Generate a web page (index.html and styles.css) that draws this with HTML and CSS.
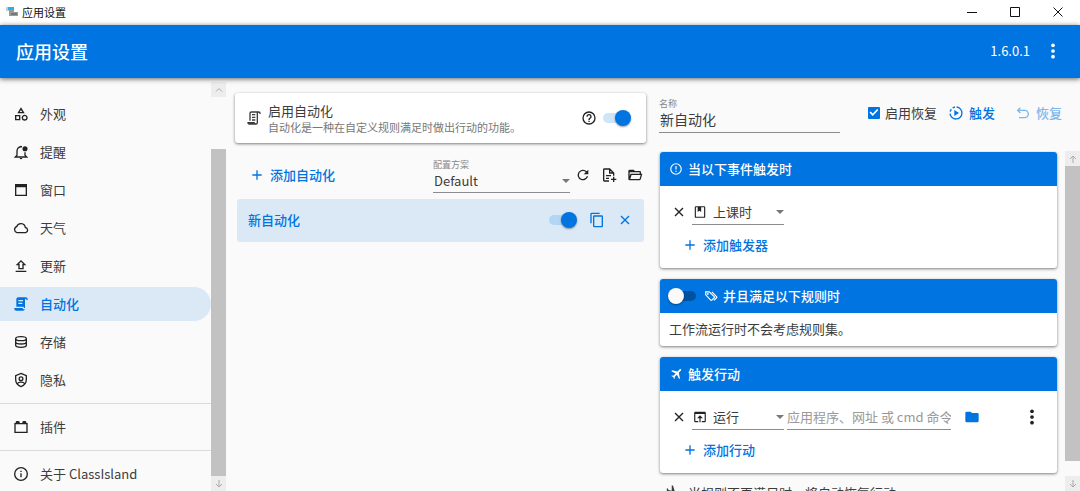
FILE: index.html
```html
<!DOCTYPE html>
<html lang="zh-CN">
<head>
<meta charset="utf-8">
<title>应用设置</title>
<link rel="stylesheet" href="styles.css">
</head>
<body>
<svg class="sprite" aria-hidden="true">
  <symbol id="shapes" viewBox="0 0 24 24"><path d="M11 13.5V21.5H3V13.5H11M9 15.5H5V19.5H9V15.5M12 2L17.5 11H6.5L12 2M12 5.86L10.08 9H13.92L12 5.86M17.5 13C20 13 22 15 22 17.5S20 22 17.5 22 13 20 13 17.5 15 13 17.5 13M17.5 15A2.5 2.5 0 1 0 17.5 20A2.5 2.5 0 0 0 17.5 15Z"/></symbol>
  <symbol id="bell" viewBox="0 0 24 24"><path class="line" d="M13.500 4.200C9 3.400 6 6.500 6 10.500V17L3.500 19.500H20.500L18 17V12.500"/><circle cx="18" cy="7" r="3.800"/><path d="M10 21H14A2 2 0 0 1 10 21M10.300 4A1.800 1.800 0 0 1 13.700 4Z"/></symbol>
  <symbol id="window" viewBox="0 0 24 24"><path fill-rule="evenodd" d="M3 3H21V21H3ZM5 8V19H19V8Z"/></symbol>
  <symbol id="cloud" viewBox="0 0 24 24"><path class="line" d="M6 19A4.700 4.700 0 0 1 5.500 10A6.700 6.700 0 0 1 18.500 11.200A4 4 0 0 1 19 19Z"/></symbol>
  <symbol id="upload" viewBox="0 0 24 24"><path fill-rule="evenodd" d="M4 19H20V21H4ZM8 17V11H4L12 3L20 11H16V17ZM10 15H14V9H15.200L12 5.800L8.800 9H10Z"/></symbol>
  <symbol id="script" viewBox="0 0 24 24"><path d="M17.800 20C17.400 21.200 16.300 22 15 22H5C3.300 22 2 20.700 2 19V18H5L14.200 18C14.600 19.200 15.700 20 17 20H17.800M19 2C20.700 2 22 3.300 22 5V6H20V5C20 4.400 19.600 4 19 4S18 4.400 18 5V18H17C16.400 18 16 17.600 16 17V16H5V5C5 3.300 6.300 2 8 2H19M8 6V8H15V6H8M8 10V12H14V10H8Z"/></symbol>
  <symbol id="script-line" viewBox="0 0 24 24"><path d="M15 20A1 1 0 0 0 16 19V4H8A1 1 0 0 0 7 5V16H5V5A3 3 0 0 1 8 2H19A3 3 0 0 1 22 5V6H20V5A1 1 0 0 0 19 4A1 1 0 0 0 18 5V19A3 3 0 0 1 15 22H5A3 3 0 0 1 2 19V18H13A2 2 0 0 0 15 20M9 6H14V8H9V6M9 10H14V12H9V10M9 14H14V16H9V14Z"/></symbol>
  <symbol id="database" viewBox="0 0 24 24"><path class="line" d="M4 7C4 3 20 3 20 7V17C20 21 4 21 4 17ZM4 7C4 11 20 11 20 7M4 12C4 16 20 16 20 12"/></symbol>
  <symbol id="shield" viewBox="0 0 24 24"><path class="line" d="M12 2.200L20 5.500V11C20 16 16.500 20.500 12 21.800C7.500 20.500 4 16 4 11V5.500ZM6.500 17.500C8.500 14.500 15.500 14.500 17.500 17.500"/><circle class="line" cx="12" cy="10" r="2.800"/></symbol>
  <symbol id="brick" viewBox="0 0 24 24"><path fill-rule="evenodd" d="M2 6H4V5Q4 3 6 3H8Q10 3 10 5V6H14V5Q14 3 16 3H18Q20 3 20 5V6H22V21H2ZM4 8V19H20V8Z"/></symbol>
  <symbol id="info" viewBox="0 0 24 24"><circle class="line" cx="12" cy="12" r="9.500"/><path d="M11 7H13V9H11M11 11H13V17H11Z"/></symbol>
  <symbol id="alert" viewBox="0 0 24 24"><circle class="line" cx="12" cy="12" r="9"/><path d="M11 7H13V13H11M11 15H13V17H11Z"/></symbol>
  <symbol id="help" viewBox="0 0 24 24"><circle class="line" cx="12" cy="12" r="9"/><path class="line" d="M9 10A3 3 0 1 1 13.200 12.600Q12 13.300 12 15"/><path d="M11 16H13V18H11Z"/></symbol>
  <symbol id="plus" viewBox="0 0 24 24"><path d="M19 13H13V19H11V13H5V11H11V5H13V11H19Z"/></symbol>
  <symbol id="close" viewBox="0 0 24 24"><path class="line" d="M6 6L18 18M18 6L6 18"/></symbol>
  <symbol id="refresh" viewBox="0 0 24 24"><path d="M17.650 6.350A8 8 0 1 0 19.730 14H17.650A6 6 0 1 1 12 6C13.660 6 15.140 6.690 16.220 7.780L13 11H20V4Z"/></symbol>
  <symbol id="file-plus" viewBox="0 0 24 24"><path class="line" d="M12 21H5Q4 21 4 20V4Q4 3 5 3H13L19 9V13M13 3V9H19M7.500 13H15M7.500 17H12M19 14.500V22.500M15 18.500H23"/></symbol>
  <symbol id="folder-open" viewBox="0 0 24 24"><path fill-rule="evenodd" d="M2 18V6Q2 4 4 4H10L12 6H19Q21 6 21 8V10H23L20.800 18Q20.200 20 18.500 20H4Q2 20 2 18ZM4 8V14L5.200 10H19V8ZM6.800 12L5 18H18.800L20.500 12Z"/></symbol>
  <symbol id="folder" viewBox="0 0 24 24"><path d="M10 4H4Q2 4 2 6V18Q2 20 4 20H20Q22 20 22 18V8Q22 6 20 6H12Z"/></symbol>
  <symbol id="copy" viewBox="0 0 24 24"><path class="line" d="M3 17V3Q3 2 4 2H16M8 6H19Q20 6 20 7V21Q20 22 19 22H8Q7 22 7 21V7Q7 6 8 6Z"/></symbol>
  <symbol id="play" viewBox="0 0 24 24"><path class="line" d="M13 3A9 9 0 1 1 3 13M3.300 10A9 9 0 0 1 5 6.400M7 4.500A9 9 0 0 1 10.500 3"/><path d="M9.500 7.500V16.500L16.500 12Z"/></symbol>
  <symbol id="undo" viewBox="0 0 24 24"><path class="line" d="M8 4L4 8L8 12M4 8H14.500A5.500 5.500 0 0 1 14.500 19H6"/></symbol>
  <symbol id="book" viewBox="0 0 24 24"><path fill-rule="evenodd" d="M5 2H19Q21 2 21 4V20Q21 22 19 22H5Q3 22 3 20V4Q3 2 5 2ZM5 4V20H19V4H14V12L11 10L8 12V4Z"/></symbol>
  <symbol id="tags" viewBox="0 0 24 24"><path class="line" d="M3 5V10L11.500 19Q12.500 20 13.500 19L17.500 15Q18.500 14 17.500 13L9 5ZM13.500 5L21.500 13Q22.500 14 21.500 15L17 19.500"/><circle cx="6.500" cy="8.500" r="1.500"/></symbol>
  <symbol id="plane" viewBox="0 0 24 24"><path d="M20.560 3.910C21.150 4.500 21.150 5.450 20.560 6.030L16.670 9.920L18.790 19.110L17.380 20.530L13.500 13.100L9.600 17L9.960 19.470L8.890 20.530L7.130 17.350L3.940 15.580L5 14.500L7.500 14.870L11.370 11L3.940 7.090L5.360 5.680L14.550 7.800L18.440 3.910C19 3.330 20 3.330 20.560 3.910Z"/></symbol>
  <symbol id="landing" viewBox="0 0 24 24"><path d="M2.500 19H21.500V21H2.500V19M9.680 13.270L19.340 15.850C20.140 16.060 20.960 15.590 21.180 14.790C21.390 14 20.920 13.170 20.120 12.950L14.810 11.530L12.050 2.500L10.120 2V10.280L5.150 8.950L4.220 6.630L2.770 6.240V11.410L9.680 13.270Z"/></symbol>
  <symbol id="run" viewBox="0 0 24 24"><path fill-rule="evenodd" d="M2 5Q2 3 4 3H20Q22 3 22 5V19Q22 21 20 21H15V19H20V7H4V19H9V21H4Q2 21 2 19ZM12 9L17 14H13V21H11V14H7Z"/></symbol>
  <symbol id="dots" viewBox="0 0 24 24"><circle cx="12" cy="3.500" r="2.800"/><circle cx="12" cy="12" r="2.800"/><circle cx="12" cy="20.500" r="2.800"/></symbol>
  <symbol id="caret" viewBox="0 0 8 4"><path d="M0 0H8L4 4Z"/></symbol>
  <symbol id="chevron-up" viewBox="0 0 10 10"><path class="hair" d="M2 6.500L5 3.500L8 6.500"/></symbol>
  <symbol id="arrow-up" viewBox="0 0 10 10"><path class="hair" d="M5 9V2M2 5L5 2L8 5"/></symbol>
  <symbol id="arrow-down" viewBox="0 0 10 10"><path class="hair" d="M5 1V8M2 5L5 8L8 5"/></symbol>
  <symbol id="minimize" viewBox="0 0 10 10"><path class="hair" d="M0 5.500H10"/></symbol>
  <symbol id="maximize" viewBox="0 0 10 10"><path class="hair" d="M.5 .5H9.500V9.500H.5Z"/></symbol>
  <symbol id="exit" viewBox="0 0 10 10"><path class="hair" d="M.5 .5L9.500 9.500M9.500 .5L.5 9.500"/></symbol>
</svg>

<div class="titlebar">
  <svg class="app-logo" viewBox="0 0 14 12"><path fill="#c5cccf" d="M0 1H3V5H0Z"/><path fill="#20b4ea" d="M2 1H8V4H2Z"/><path fill="#9a9a9a" d="M3 4H8V6H12V10H3Z"/><path fill="#777" d="M5 7H11V9H5Z"/></svg>
  <span class="window-title">应用设置</span>
  <div class="window-buttons">
    <button aria-label="最小化"><svg><use href="#minimize"/></svg></button>
    <button aria-label="最大化"><svg><use href="#maximize"/></svg></button>
    <button aria-label="关闭"><svg><use href="#exit"/></svg></button>
  </div>
</div>

<header class="appbar">
  <h1>应用设置</h1>
  <span class="version">1.6.0.1</span>
  <button class="icon-button" aria-label="更多"><svg class="icon"><use href="#dots"/></svg></button>
</header>

<div class="layout">
  <div class="sidebar">
    <nav>
      <div class="nav-group">
        <a href="#"><svg class="icon"><use href="#shapes"/></svg>外观</a>
        <a href="#"><svg class="icon"><use href="#bell"/></svg>提醒</a>
        <a href="#"><svg class="icon"><use href="#window"/></svg>窗口</a>
        <a href="#"><svg class="icon"><use href="#cloud"/></svg>天气</a>
        <a href="#"><svg class="icon"><use href="#upload"/></svg>更新</a>
        <a href="#" class="active" aria-current="page"><svg class="icon"><use href="#script"/></svg>自动化</a>
        <a href="#"><svg class="icon"><use href="#database"/></svg>存储</a>
        <a href="#"><svg class="icon"><use href="#shield"/></svg>隐私</a>
      </div>
      <div class="nav-group"><a href="#"><svg class="icon"><use href="#brick"/></svg>插件</a></div>
      <div class="nav-group"><a href="#"><svg class="icon"><use href="#info"/></svg>关于 ClassIsland</a></div>
    </nav>
    <div class="scrollbar scrollbar-nav">
      <button aria-label="向上滚动"><svg><use href="#chevron-up"/></svg></button>
      <div class="track"><div class="thumb"></div></div>
      <button aria-label="向下滚动"><svg><use href="#arrow-down"/></svg></button>
    </div>
  </div>

  <main class="automations">
    <section class="card enable-card">
      <svg class="icon"><use href="#script-line"/></svg>
      <div class="enable-text">
        <label for="enable">启用自动化</label>
        <p>自动化是一种在自定义规则满足时做出行动的功能。</p>
      </div>
      <button class="icon-button" aria-label="帮助"><svg class="icon"><use href="#help"/></svg></button>
      <input id="enable" class="switch" type="checkbox" role="switch" checked>
    </section>

    <div class="toolbar">
      <button class="text-button"><svg class="icon"><use href="#plus"/></svg>添加自动化</button>
      <div class="field scheme">
        <label for="scheme">配置方案</label>
        <div class="select">
          <select id="scheme"><option>Default</option></select>
          <svg class="caret"><use href="#caret"/></svg>
        </div>
      </div>
      <div class="tools">
        <button class="icon-button" aria-label="刷新"><svg class="icon"><use href="#refresh"/></svg></button>
        <button class="icon-button" aria-label="新建配置"><svg class="icon"><use href="#file-plus"/></svg></button>
        <button class="icon-button" aria-label="打开文件夹"><svg class="icon"><use href="#folder-open"/></svg></button>
      </div>
    </div>

    <div class="automation-item">
      <span class="automation-name">新自动化</span>
      <input class="switch" type="checkbox" role="switch" aria-label="启用新自动化" checked>
      <button class="icon-button" aria-label="复制"><svg class="icon"><use href="#copy"/></svg></button>
      <button class="icon-button" aria-label="删除"><svg class="icon"><use href="#close"/></svg></button>
    </div>
  </main>

  <section class="editor">
    <div class="editor-head">
      <div class="field name-field">
        <label for="name">名称</label>
        <input id="name" type="text" value="新自动化">
      </div>
      <label class="check"><input type="checkbox" checked>启用恢复</label>
      <button class="text-button"><svg class="icon"><use href="#play"/></svg>触发</button>
      <button class="text-button restore" disabled><svg class="icon"><use href="#undo"/></svg>恢复</button>
    </div>

    <div class="editor-body">
      <div class="panels">
        <section class="card">
          <h2><svg class="icon"><use href="#alert"/></svg>当以下事件触发时</h2>
          <div class="panel-body">
            <div class="row">
              <button class="icon-button" aria-label="删除触发器"><svg class="icon"><use href="#close"/></svg></button>
              <div class="select kind">
                <svg class="icon"><use href="#book"/></svg>
                <select aria-label="触发器类型"><option>上课时</option></select>
                <svg class="caret"><use href="#caret"/></svg>
              </div>
            </div>
            <button class="text-button"><svg class="icon"><use href="#plus"/></svg>添加触发器</button>
          </div>
        </section>

        <section class="card">
          <h2 class="with-switch"><input class="switch" type="checkbox" role="switch" aria-label="启用规则"><svg class="icon"><use href="#tags"/></svg>并且满足以下规则时</h2>
          <p class="note">工作流运行时不会考虑规则集。</p>
        </section>

        <section class="card">
          <h2><svg class="icon"><use href="#plane"/></svg>触发行动</h2>
          <div class="panel-body">
            <div class="row">
              <button class="icon-button" aria-label="删除行动"><svg class="icon"><use href="#close"/></svg></button>
              <div class="select kind">
                <svg class="icon"><use href="#run"/></svg>
                <select aria-label="行动类型"><option>运行</option></select>
                <svg class="caret"><use href="#caret"/></svg>
              </div>
              <input class="command" type="text" aria-label="命令" placeholder="应用程序、网址 或 cmd 命令">
              <button class="icon-button browse" aria-label="浏览"><svg class="icon"><use href="#folder"/></svg></button>
              <button class="icon-button more" aria-label="更多"><svg class="icon"><use href="#dots"/></svg></button>
            </div>
            <button class="text-button"><svg class="icon"><use href="#plus"/></svg>添加行动</button>
          </div>
        </section>

        <p class="recover"><svg class="icon"><use href="#landing"/></svg>当规则不再满足时，将自动恢复行动。</p>
      </div>
      <div class="scrollbar">
        <button aria-label="向上滚动"><svg><use href="#arrow-up"/></svg></button>
        <div class="track"><div class="thumb"></div></div>
        <button aria-label="向下滚动"><svg><use href="#arrow-down"/></svg></button>
      </div>
    </div>
  </section>
</div>
</body>
</html>
```
FILE: styles.css
```css
:root {
  --blue: #0074e0;
  --tint: #dbe9f7;
  --ink: #3c3c3c;
  --line: #8c8c8c;
}

* { box-sizing: border-box; }

body {
  display: flex;
  flex-direction: column;
  height: 100vh;
  margin: 0;
  overflow: hidden;
  background: #fafafa;
  color: var(--ink);
  font: 13px/18px "Noto Sans CJK SC", "Noto Sans", sans-serif;
}

h1, h2, p { margin: 0; }

button, input, select { font: inherit; color: inherit; }

button {
  display: flex;
  align-items: center;
  padding: 0;
  border: 0;
  background: none;
}

.sprite { position: absolute; width: 0; height: 0; }

.icon { flex: none; width: 16px; height: 16px; fill: currentColor; }
.line { fill: none; stroke: currentColor; stroke-width: 2; }
.hair { fill: none; stroke: currentColor; stroke-width: 1; }
.icon-button { flex: none; color: #222; }

.titlebar {
  display: flex;
  flex: none;
  align-items: center;
  height: 25px;
  padding: 0 0 2px 6px;
  background: #fff;
  color: #111;
  font-size: 11px;
}

.app-logo { width: 14px; height: 12px; }
.window-title { flex: 1; margin-left: 2px; }
.window-buttons { display: flex; margin-right: 1px; }
.window-buttons button { justify-content: center; width: 43px; height: 22px; }
.window-buttons svg { width: 10px; height: 10px; }

.appbar {
  position: relative;
  display: flex;
  flex: none;
  align-items: center;
  height: 53px;
  padding: 0 19px 2px 16px;
  background: var(--blue);
  box-shadow: 0 1px 5px rgba(0, 0, 0, .6);
  color: #fff;
}

.appbar h1 { flex: 1; font-size: 18px; font-weight: 500; line-height: 26px; }
.version { margin-right: 15px; }
.appbar .icon-button { color: #fff; }

.layout {
  display: grid;
  flex: 1;
  grid-template-columns: 226px 424fr 430fr;
  min-height: 0;
}

.sidebar { display: flex; min-height: 0; }
.sidebar nav { flex: 1; padding-top: 13px; }

.nav-group {
  display: grid;
  gap: 4px;
  padding: 6px 0;
  border-bottom: 1px solid #dadada;
}

.nav-group:last-child { padding-bottom: 0; border: 0; }

.nav-group a {
  display: flex;
  align-items: center;
  gap: 11px;
  height: 34px;
  padding-left: 13px;
  border-radius: 0 17px 17px 0;
  color: var(--ink);
  text-decoration: none;
}

.nav-group .icon { color: #222; }
.nav-group .active { background: var(--tint); color: var(--blue); font-weight: 500; }
.nav-group .active .icon { color: var(--blue); }

.scrollbar { display: flex; flex: none; flex-direction: column; width: 15px; }
.scrollbar button { justify-content: center; height: 15px; background: #ededed; color: #aaa; }
.scrollbar svg { width: 10px; height: 10px; }
.track { display: flex; flex: 1; flex-direction: column; }
.thumb { flex: 1; margin-bottom: 15px; background: #c2c2c2; }
.scrollbar-nav { padding-top: 4px; }
.scrollbar-nav .thumb { margin: 52px 0 0; }

.card {
  flex: none;
  overflow: hidden;
  border-radius: 3px;
  background: #fff;
  box-shadow: 0 1px 3px rgba(0, 0, 0, .5);
}

.automations { min-width: 0; padding: 15px 4px 0 9px; }

.enable-card {
  display: flex;
  align-items: center;
  height: 50px;
  padding: 0 15px 0 11px;
}

.enable-text { flex: 1; margin-left: 6px; }
.enable-text label { display: block; }
.enable-text p { color: #777; font-size: 11px; line-height: 15px; }
.enable-card .switch { margin-left: 3px; }

.switch {
  display: flex;
  flex: none;
  align-items: center;
  width: 31px;
  height: 16px;
  margin: 0;
  appearance: none;
  border: 3px solid transparent;
  border-radius: 8px;
  background: #b3d5f5 padding-box;
}

.switch::before {
  flex: none;
  width: 16px;
  height: 16px;
  margin: 0 -3px;
  border-radius: 50%;
  background: #fafafa;
  box-shadow: 0 1px 2px rgba(0, 0, 0, .4);
  content: "";
}

.switch:checked { justify-content: flex-end; }
.switch:checked::before { background: var(--blue); }
.switch:not(:checked) { background-color: #0052a0; }
.enable-card .switch { background-color: #cde5f8; }

.text-button { gap: 5px; color: var(--blue); font-weight: 500; }

.toolbar { display: flex; align-items: center; margin-top: 15px; padding: 0 3px 0 14px; }
.toolbar > .text-button, .tools { padding-bottom: 2px; }
.field label { display: block; color: #888; font-size: 9px; line-height: 14px; }
.scheme { width: 137px; margin-left: auto; }
.select { display: flex; align-items: center; border-bottom: 1px solid var(--line); }

.select select {
  flex: 1;
  min-width: 0;
  padding: 0;
  border: 0;
  outline: 0;
  appearance: none;
  background: none;
}

.scheme .select { padding: 0 0 3px 1px; }
.scheme select { height: 17px; }
.caret { flex: none; width: 8px; height: 4px; fill: #777; }
.tools { display: flex; gap: 10px; margin-left: 5px; }

.automation-item {
  display: flex;
  align-items: center;
  height: 43px;
  margin: 6px 2px 0;
  padding: 0 11px 1px;
  border-radius: 3px;
  background: var(--tint);
  color: var(--blue);
}

.automation-name { flex: 1; font-weight: 500; }
.automation-item .icon-button { margin-left: 12px; color: var(--blue); }

.editor { display: flex; flex-direction: column; min-width: 0; min-height: 0; }
.editor-head { display: flex; flex: none; align-items: center; height: 73px; padding: 0 18px 4px 9px; }
.name-field { flex: 1; margin-top: 4px; }

.name-field input {
  display: block;
  width: 100%;
  height: 22px;
  padding: 0 1px 5px;
  border: 0;
  border-bottom: 1px solid var(--line);
  outline: 0;
  background: none;
  font-size: 14px;
}

.check { display: flex; align-items: center; gap: 5px; margin: 0 11px 0 28px; }

.check input {
  display: grid;
  place-items: center;
  width: 12px;
  height: 12px;
  margin: 0;
  appearance: none;
  border-radius: 1px;
  background: var(--blue);
}

.check input::before {
  width: 9px;
  height: 7px;
  background: #fff;
  clip-path: polygon(0 50%, 14% 34%, 36% 66%, 86% 0, 100% 16%, 36% 100%);
  content: "";
}

.restore { margin-left: 20px; opacity: .5; }

.editor-body { display: flex; flex: 1; min-height: 0; }

.panels {
  display: flex;
  flex: 1;
  flex-direction: column;
  gap: 11px;
  min-width: 0;
  padding: 1px 8px 0 10px;
  overflow: hidden;
}

.card h2 {
  display: flex;
  align-items: center;
  gap: 4px;
  height: 34px;
  padding-left: 8px;
  background: var(--blue);
  color: #fff;
  font-size: 13px;
  font-weight: 500;
}

.card h2 .icon { width: 16px; height: 14px; }
.note { padding: 7px 9px 8px; }
.panel-body { padding: 13px 12px 10px 11px; }
.row { display: flex; }
.kind { width: 92px; height: 26px; margin-left: 5px; }
.kind .icon { width: 16px; height: 14px; color: #222; }
.kind select { margin-left: 5px; }
.panel-body > .text-button { height: 26px; margin: 7px 0 0 11px; }

.command {
  width: 164px;
  height: 26px;
  margin-left: 3px;
  padding: 0;
  border: 0;
  border-bottom: 1px solid var(--line);
  outline: 0;
  background: none;
}

.command::placeholder { color: #999; }
.browse { margin-left: 13px; color: var(--blue); }
.more { margin: 0 5px 0 auto; }
.recover { display: flex; flex: none; gap: 7px; padding: 0 5px; white-space: nowrap; }
```
